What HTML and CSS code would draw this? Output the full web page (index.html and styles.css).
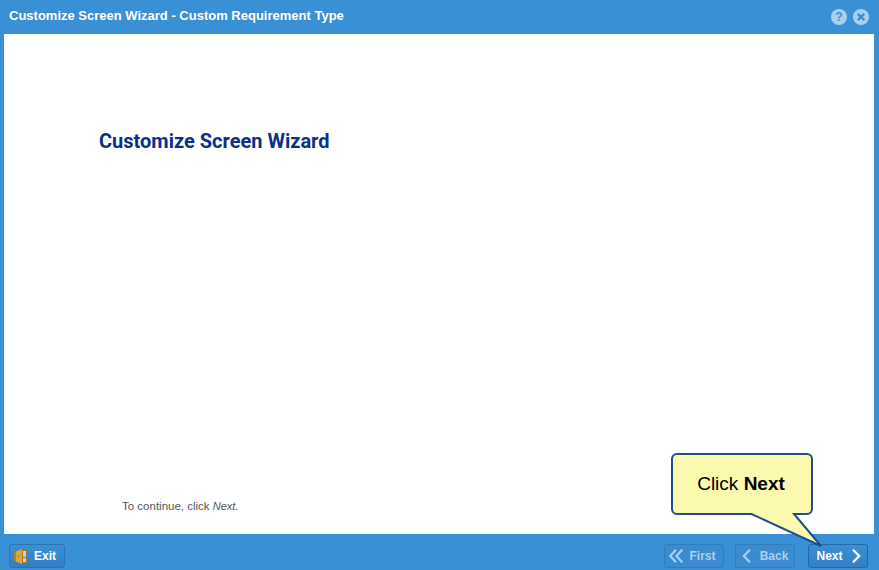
FILE: index.html
```html
<!DOCTYPE html>
<html lang="en">
<head>
<meta charset="utf-8">
<title>Customize Screen Wizard</title>
<link rel="stylesheet" href="styles.css">
</head>
<body>
<div class="window">
  <header class="titlebar">
    <span class="title">Customize Screen Wizard - Custom Requirement Type</span>
    <div class="tools">
      <span class="tool">?</span>
      <svg class="toolsvg" width="16" height="16" viewBox="0 0 16 16"><circle cx="8" cy="8" r="8" fill="#a9d0ef"/><path d="M4.800 4.800l6.400 6.400M11.200 4.800l-6.400 6.400" stroke="#3a90d5" stroke-width="2.400"/></svg>
    </div>
  </header>
  <main class="content">
    <h1 class="heading">Customize Screen Wizard</h1>
    <p class="hint">To continue, click <em>Next.</em></p>
  </main>
  <footer class="footer">
    <button class="btn exit">
      <svg width="14" height="16" viewBox="0 0 14 16"><path d="M0 4l2-.5V13l-2-.5z" fill="#b9801a"/><path d="M2 3.500L8 1v15l-6-2.500z" fill="#e0a92c"/><rect x="8" y="2" width="5" height="13" fill="#a8761f"/><rect x="9" y="3" width="3" height="11" fill="#c4d8ea"/><path d="M9 8h3v3H9z" fill="#8fb2d4"/><circle cx="4.500" cy="8.500" r="1.300" fill="#8b95a5"/></svg>
      <span>Exit</span>
    </button>
    <div class="nav">
      <button class="btn dim first">
        <svg width="14" height="14" viewBox="0 0 14 14"><path d="M7 .7L1.200 7L7 13.300M13.300 .7L7.500 7L13.300 13.300" fill="none" stroke="#a9d0ef" stroke-width="2.200"/></svg>
        <span>First</span>
      </button>
      <button class="btn dim back">
        <svg width="9" height="14" viewBox="0 0 9 14"><path d="M8 .7L1.800 7L8 13.300" fill="none" stroke="#a9d0ef" stroke-width="2.200"/></svg>
        <span>Back</span>
      </button>
      <button class="btn next">
        <span>Next</span>
        <svg width="9" height="14" viewBox="0 0 9 14"><path d="M1 .7L7.200 7L1 13.300" fill="none" stroke="#fff" stroke-width="2.200"/></svg>
      </button>
    </div>
  </footer>
  <div class="callout">
    <svg class="callout-shape" width="155" height="96" viewBox="0 0 155 96"><path d="M7 1H137a5 5 0 0 1 5 5V56a5 5 0 0 1-5 5H124L151 93L81.500 61H7a5 5 0 0 1-5-5V6a5 5 0 0 1 5-5z" fill="#fcfaae" stroke="#1f4e8c" stroke-width="2"/></svg>
    <span class="callout-text">Click <b>Next</b></span>
  </div>
</div>
</body>
</html>
```
FILE: styles.css
```css
* { box-sizing: border-box; }
html, body { margin: 0; padding: 0; }
body { width: 879px; height: 570px; overflow: hidden; font-family: "Liberation Sans", Arial, sans-serif; }
.window { position: relative; width: 879px; height: 570px; background: #3a90d5; display: flex; flex-direction: column; padding: 0 5px 0 4px; }
.titlebar { height: 34px; margin: 0 -5px 0 -4px; padding: 0 10px 3px 9px; display: flex; align-items: center; justify-content: space-between; }
.title { color: #fff; font-size: 13px; font-weight: bold; line-height: 15px; }
.tools { display: flex; gap: 6px; align-items: center; margin-top: 3px; }
.tool { width: 16px; height: 16px; border-radius: 50%; background: #a9d0ef; color: #3a90d5; font-size: 12px; font-weight: bold; text-align: center; line-height: 16px; }
.toolsvg { display: block; }
.content { height: 500px; background: #fff; display: flex; flex-direction: column; padding: 95px 0 0 95px; }
.heading { margin: 0; font-family: Roboto, sans-serif; font-size: 20px; line-height: 24px; font-weight: bold; color: #0a3184; }
.hint { margin: 346px 0 0 23px; font-size: 11.500px; line-height: 14px; color: #555; }
.hint em { font-size: 11px; }
.footer { flex: 1; margin: 0 -5px 0 -4px; padding: 10px 11px 2px 9px; display: flex; justify-content: space-between; }
.nav { display: flex; gap: 11px; }
.btn { height: 24px; padding: 0; display: flex; align-items: center; justify-content: center; gap: 7px; background: linear-gradient(#3a90d5, #327fc2); border: 1px solid #2b73b3; border-radius: 3px; color: #fff; font: bold 12px "Liberation Sans", Arial, sans-serif; }
.exit { width: 56px; gap: 6px; justify-content: flex-start; padding-left: 4px; }
.dim { width: 60px; color: #a9d0ef; background: #3a8ccf; border-color: #307dc0; }
.first { gap: 6px; padding-right: 3px; }
.back { gap: 9px; }
.next { width: 60px; gap: 9px; margin-left: 2px; padding-left: 1px; border-color: #2468a8; }
.callout { position: absolute; left: 670px; top: 453px; width: 155px; height: 96px; }
.callout-shape { display: block; }
.callout-text { position: absolute; left: 1px; top: 20px; width: 140px; text-align: center; font-size: 19px; line-height: 22px; color: #000; }
```
